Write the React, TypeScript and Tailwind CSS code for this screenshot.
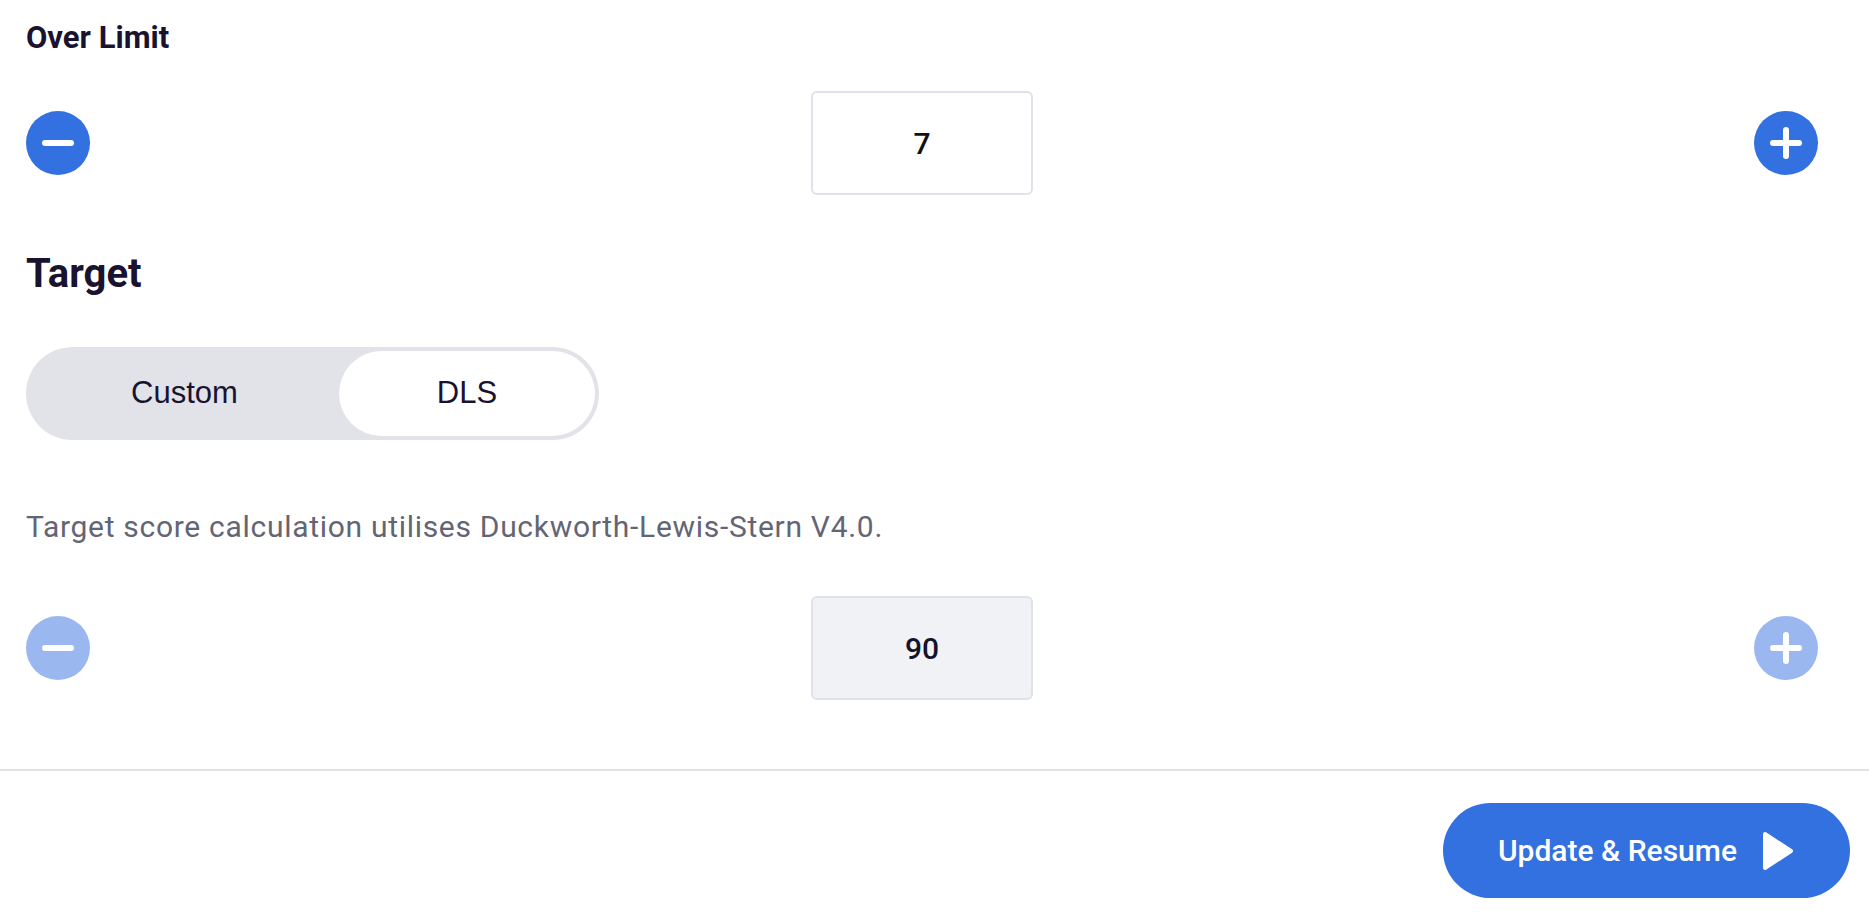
import React, { useState } from 'react';

const BLUE = 'bg-[#3370e0]';

function RoundIcon({ kind, disabled }: { kind: 'minus' | 'plus'; disabled?: boolean }) {
  return (
    <button
      className={`w-[64px] h-[64px] rounded-full flex items-center justify-center shrink-0 ${
        disabled ? 'bg-[#9bb7f0]' : BLUE
      }`}
    >
      <svg width="64" height="64" viewBox="0 0 64 64">
        <line x1="19" y1="32" x2="45" y2="32" stroke="white" strokeWidth="6" strokeLinecap="round" />
        {kind === 'plus' && (
          <line x1="32" y1="19" x2="32" y2="45" stroke="white" strokeWidth="6" strokeLinecap="round" />
        )}
      </svg>
    </button>
  );
}

function Stepper({ value, disabled }: { value: number; disabled?: boolean }) {
  return (
    <div className="flex items-center justify-between">
      <RoundIcon kind="minus" disabled={disabled} />
      <div
        className={`w-[222px] h-[104px] rounded-[6px] border-2 border-[#dfe2e8] flex items-center justify-center text-[30px] font-medium ${
          disabled ? 'bg-[#f1f2f6] text-[#16122b]' : 'bg-white text-[#111111]'
        }`}
      >
        {value}
      </div>
      <RoundIcon kind="plus" disabled={disabled} />
    </div>
  );
}

export default function App() {
  const [mode, setMode] = useState<'custom' | 'dls'>('dls');

  return (
    <div className="min-h-screen bg-white font-['Roboto',sans-serif] text-[#19132f]">
      <div className="pl-[26px] pr-[51px] pt-[23px]">
        <h3 className="text-[31px] leading-[30px] font-bold">Over Limit</h3>

        <div className="mt-[38px]">
          <Stepper value={7} />
        </div>

        <h2 className="mt-[59px] text-[40px] leading-[39px] font-bold">Target</h2>

        <div className="mt-[54px] w-[573px] h-[93px] rounded-full bg-[#e1e3e8] p-[4px] flex font-['Liberation_Sans',Arial,sans-serif] text-[31px] text-[#19132f]">
          <button
            onClick={() => setMode('custom')}
            className={`flex-1 rounded-full flex items-center justify-center ${mode === 'custom' ? 'bg-white' : ''}`}
          >
            Custom
          </button>
          <button
            onClick={() => setMode('dls')}
            className={`w-[256px] rounded-full flex items-center justify-center ${mode === 'dls' ? 'bg-white' : ''}`}
          >
            DLS
          </button>
        </div>

        <p className="mt-[73px] text-[30px] leading-[28px] tracking-[0.7px] text-[#646574]">
          Target score calculation utilises Duckworth-Lewis-Stern V4.0.
        </p>

        <div className="mt-[55px]">
          <Stepper value={90} disabled />
        </div>
      </div>

      <div className="mt-[69px] border-t-2 border-[#dfe3e7] pt-[32px] pb-[23px] pr-[19px] flex justify-end">
        <button className={`h-[95px] rounded-full ${BLUE} text-white pl-[55px] pr-[56px] flex items-center gap-[25px] text-[30px] font-medium`}>
          Update &amp; Resume
          <svg width="32" height="40" viewBox="0 0 32 40">
            <polygon points="3,3 29,20 3,37" fill="white" stroke="white" strokeWidth="4" strokeLinejoin="round" />
          </svg>
        </button>
      </div>
    </div>
  );
}
